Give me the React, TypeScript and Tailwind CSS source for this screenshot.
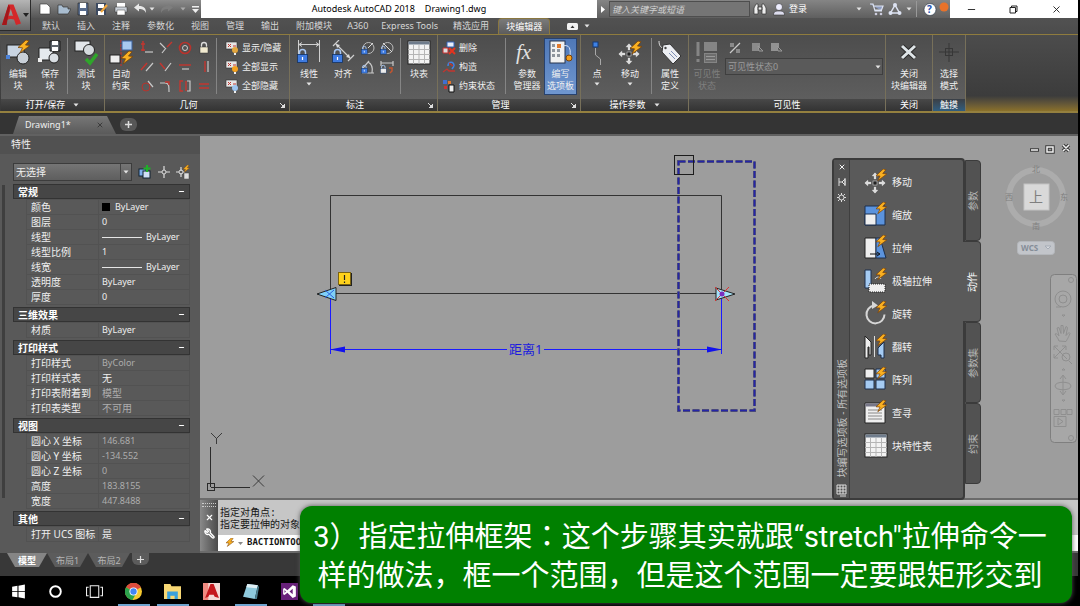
import React from "react";
import { Minus, X, Wrench } from "lucide-react";

type Kids = { children?: React.ReactNode };

const Bolt = ({ x = 0, y = 0, s = 1 }: { x?: number; y?: number; s?: number }) => (
  <path
    transform={`translate(${x} ${y}) scale(${s})`}
    d="M8 0L0 7.5L4.5 7.8L2 13L12 5.5L7.5 5L11 0.8Z"
    fill="#f9b021"
    stroke="#7a4208"
    strokeWidth="0.8"
  />
);

const Lock = ({ x, y, s = 1, fill = "#3f7be0" }: { x: number; y: number; s?: number; fill?: string }) => (
  <g transform={`translate(${x} ${y}) scale(${s})`}>
    <path d="M2.5 6V3.5a3 3 0 0 1 6 0V6" fill="none" stroke="#a9c8f5" strokeWidth="1.5" />
    <rect x="0.5" y="5.5" width="10" height="8" fill={fill} stroke="#14325f" strokeWidth="0.8" />
    <path d="M5.5 8v3" stroke="#fff" strokeWidth="1.2" />
  </g>
);

const Svg = ({ w = 24, h = 26, children }: { w?: number; h?: number } & Kids) => (
  <svg width={w} height={h} viewBox={`0 0 ${w} ${h}`} fill="none" className="shrink-0" aria-hidden="true">
    {children}
  </svg>
);

const Down = () => (
  <svg width="6" height="4" viewBox="0 0 6 4" className="shrink-0" aria-hidden="true">
    <path d="M0.500 0.500h5L3 3.500z" fill="#e4e4e4" />
  </svg>
);

const MoveArrows = () => (
  <g fill="#dcdcdc" stroke="#333" strokeWidth="0.5">
    <path d="M11 3l4 4.500h-2.500v3h-3v-3H7zM11 25l4-4.500h-2.500v-3h-3v3H7zM0 14l4.500-4v2.500h3v3h-3V18zM22 14l-4.500-4v2.500h-3v3h3V18z" />
    <rect x="9" y="12" width="4" height="4" fill="#222" stroke="#eee" />
  </g>
);

const TableIcon = () => (
  <Svg>
    <rect x="1" y="1" width="22" height="23" fill="#f3f3f3" stroke="#222" />
    <rect x="1.500" y="1.500" width="21" height="3" fill="#6f7c8c" />
    <path d="M1 9.500h22M1 14.500h22M1 19.500h22M6.500 5v19M12 5v19M17.500 5v19" stroke="#b5b5b5" />
  </Svg>
);

const icons = {
  editBlock: (
    <Svg>
      <rect x="1" y="5" width="17" height="12" fill="#c8d4e2" stroke="#222" />
      <rect x="0" y="15" width="4" height="4" fill="#4b82d8" />
      <circle cx="17" cy="18" r="6" fill="#c9d0d8" stroke="#222" />
      <Bolt x={12} y={0} />
    </Svg>
  ),
  saveBlock: (
    <Svg>
      <path d="M1 8h14v12H1z" fill="#e5e9ed" stroke="#222" />
      <circle cx="16" cy="18" r="5" fill="#d8dde2" stroke="#222" />
      <path d="M12 1h10v10H12z" fill="#5d646c" stroke="#1b1b1b" />
      <path d="M14 1h6v4h-6zM14 7h6v4h-6z" fill="#fff" />
      <path d="M0 18h4v4H0z" fill="#eee" />
    </Svg>
  ),
  testBlock: (
    <Svg>
      <rect x="1" y="1" width="15" height="10" fill="#e2e6ea" stroke="#222" />
      <circle cx="15" cy="10" r="5.500" fill="#d5dade" stroke="#222" />
      <path d="M12 19l4 4L23 14" stroke="#2fa52b" strokeWidth="3.500" />
    </Svg>
  ),
  autoCon: (
    <Svg>
      <path d="M12 0v26" stroke="#cf2f28" strokeDasharray="3 1" />
      <rect x="13" y="1" width="10" height="9" fill="#a9c9f0" stroke="#3c62a0" />
      <rect x="1" y="15" width="10" height="8" fill="#eee" stroke="#222" />
      <Bolt x={12} y={11} />
    </Svg>
  ),
  linear: (
    <Svg>
      <path d="M1.500 0v22M22.500 0v22M2 4.500h20M5 2.500L2 4.500l3 2M19 2.500l3 2-3 2" stroke="#cfcfcf" />
      <Lock x={0} y={9} />
    </Svg>
  ),
  aligned: (
    <Svg>
      <path d="M2 6L8 0M17 21l6-6M5 4l14 14" stroke="#cfcfcf" strokeWidth="1.200" />
      <path d="M5 4l4 1-3 3zM19 18l-4-1 3-3z" fill="#ddd" />
      <Lock x={1} y={9} />
    </Svg>
  ),
  fx: (
    <Svg>
      <text x="1" y="19" fontFamily="Liberation Serif, serif" fontStyle="italic" fontSize="21" fill="#e2e2e2">fx</text>
    </Svg>
  ),
  palettes: (
    <Svg>
      <rect x="1" y="1" width="15" height="22" fill="#f1f1f1" stroke="#26354f" />
      <path d="M3 4h3v3H3zM8 4h3v3H8zM3 9h3v3H3zM8 9h3v3H8zM3 14h3v3H3zM8 14h3v3H8z" fill="#8e949c" />
      <path d="M8 4h4v4H8z" fill="#e27a2c" />
      <path d="M14 6c6-2 8 3 7 9" stroke="#dbe6f6" />
      <circle cx="20" cy="18" r="3" fill="#f5a11e" stroke="#7a4208" />
    </Svg>
  ),
  point: (
    <Svg>
      <rect x="8" y="2" width="5" height="5" fill="#3f82e4" stroke="#153a78" />
      <path d="M10.500 8v7l5 4v6" stroke="#a8a8a8" />
    </Svg>
  ),
  move: (
    <Svg>
      <MoveArrows />
      <Bolt x={12} y={1} />
    </Svg>
  ),
  tag: (
    <Svg>
      <path d="M1 1c0 5 2 7 5 7" stroke="#ddd" />
      <path d="M5 5l7-1 11 12-8 8L4 12z" fill="#eceef2" stroke="#333" />
      <path d="M11 13l6 6M13 11l6 6" stroke="#7f8fb5" />
      <circle cx="7.500" cy="8" r="1.200" fill="#444" />
    </Svg>
  ),
  visState: (
    <Svg>
      <path d="M3 2v14M3 19v3" stroke="#858585" strokeWidth="3" />
      <rect x="9" y="2" width="13" height="9" fill="#858585" />
      <rect x="9.500" y="13.500" width="12" height="9" stroke="#858585" fill="#6d6d6d" />
      <path d="M11 16.500h9M11 19.500h9" stroke="#999" />
    </Svg>
  ),
  close: (
    <Svg>
      <path d="M5 6l13 12M18 6L5 18" stroke="#2b2b2b" strokeWidth="5" />
      <path d="M5 6l13 12M18 6L5 18" stroke="#dfe5e8" strokeWidth="3" />
    </Svg>
  ),
  pick: (
    <Svg>
      <path d="M12 3v19M2 12h20" stroke="#373737" />
      <rect x="8.500" y="8.500" width="7" height="7" stroke="#373737" />
    </Svg>
  ),
};

const Big = ({ icon, a, b, w, arrow, dim, active }: {
  icon: React.ReactNode; a: string; b?: string; w: string; arrow?: boolean; dim?: boolean; active?: boolean;
}) => (
  <button
    disabled={dim}
    className={`flex shrink-0 flex-col items-center whitespace-nowrap text-[9px] leading-3 ${w} ${
      dim ? "text-[#7f7f7f]" : "text-[#f0f0f0]"
    } ${active ? "my-[3px] h-[57px] border border-[#28426f] bg-linear-to-b from-[#4f78b8] to-[#6f96cf] pt-px" : "pt-[5px]"}`}
  >
    {icon}
    <span className="mt-0.5">{a}</span>
    {b && <span>{b}</span>}
    {arrow && <span className="pt-0.5"><Down /></span>}
  </button>
);

const Divider = () => <span className="mt-[3px] h-14 w-px shrink-0 bg-[#858585]" />;

const Panel = ({ title, w, arrow, launcher, blue, children }: {
  title: string; w: string; arrow?: boolean; launcher?: boolean; blue?: boolean;
} & Kids) => (
  <section className={`flex shrink-0 flex-col border-r border-[#77705a] ${w}`}>
    <div className="flex h-16 bg-linear-to-b from-[#4d4d4d] to-[#5e5e5e]">{children}</div>
    <div className={`flex h-3 items-center justify-center gap-2 bg-linear-to-b text-[9px] leading-3 text-white ${blue ? "from-[#3a3f45] to-[#2f5e80]" : "from-[#484848] to-[#333]"}`}>
      <span className={launcher ? "ml-auto" : ""}>{title}</span>
      {arrow && <Down />}
      {launcher && (
        <button aria-label={`${title} 设置`} className="mr-1 ml-auto">
          <svg width="5" height="5" viewBox="0 0 5 5"><path d="M0 0l3 3M5 1v4H1z" stroke="#ddd" fill="#ddd" /></svg>
        </button>
      )}
    </div>
  </section>
);

const G = ({ d, red, children }: { d?: string; red?: string } & Kids) => (
  <button aria-label="约束" className="flex h-[19px] w-[19px] items-center justify-center">
    <Svg w={14} h={14}>
      {d && <path d={d} stroke="#c9c9c9" strokeWidth="1.200" />}
      {red && <path d={red} stroke="#c4362f" strokeWidth="1.400" />}
      {children}
    </Svg>
  </button>
);

const Row = ({ icon, label }: { icon: React.ReactNode; label: string }) => (
  <button className="flex h-[19px] items-center gap-[3px] text-[9px] whitespace-nowrap text-[#f0f0f0]">
    {icon}
    {label}
  </button>
);

const ShowIcon = ({ c }: { c: string }) => (
  <Svg w={14} h={14}>
    <rect x="1" y="1" width="11" height="7" fill="#e6e6e6" stroke="#333" strokeWidth="0.600" />
    <path d="M3 3l3 3M6 3L3 6M8 5h3" stroke="#c4362f" />
    <circle cx="10" cy="9" r="3" fill={c} />
    <path d="M9 12h2v2H9z" fill="#eee" />
  </Svg>
);

const ribbonTabs = ["默认", "插入", "注释", "参数化", "视图", "管理", "输出", "附加模块", "A360", "Express Tools", "精选应用"];

const Quick = ({ label, children }: { label: string } & Kids) => (
  <button aria-label={label} className="flex w-[19px] shrink-0 justify-center">
    <Svg w={14} h={14}>{children}</Svg>
  </button>
);

const Header = () => (
  <header className="flex h-[34px] shrink-0 bg-linear-to-b from-[#585858] to-[#4c4c4c]">
    <button aria-label="应用程序菜单" className="flex h-[31px] w-[31px] shrink-0 items-center justify-center gap-0.5 border-r border-b border-[#2b2b2b] bg-linear-to-b from-[#b5b5b5] to-[#666]">
      <svg width="19" height="22" viewBox="0 0 19 22" aria-hidden="true">
        <path d="M0 21L6.500 0.500h5L19 19.500l-5 1.500-2-5.500c-3-1-5-.5-7 .5L4.500 21zM6.500 12c1.500-.5 3-.5 4.500 0L8.800 5z" fill="#d3282a" />
        <path d="M0 21L6.500 0.500 8 3 4.500 21z" fill="#a3171b" />
      </svg>
      <svg width="6" height="4" viewBox="0 0 6 4"><path d="M0 0h6L3 4z" fill="#222" /></svg>
    </button>
    <div className="flex min-w-0 flex-1 flex-col">
      <div className="flex h-[18px]">
        <div className="flex w-[170px] shrink-0 items-center bg-linear-to-b from-[#8c8c8c] to-[#555] pl-1">
          <Quick label="新建"><path d="M2 2h7l3 3v7H2z" fill="#fff" stroke="#333" strokeWidth="0.600" /></Quick>
          <Quick label="打开"><path d="M1 12V3h4l1 2h5v2h3l-3 5z" fill="#a9bdd0" stroke="#333" strokeWidth="0.700" /></Quick>
          <Quick label="保存"><path d="M2 1h10v12H2z" fill="#586c8c" stroke="#222" strokeWidth="0.600" /><path d="M4 1h6v5H4zM4 9h6v4H4z" fill="#fff" /></Quick>
          <Quick label="另存为"><path d="M1 1h10v12H1z" fill="#3d4a60" /><path d="M3 2h6v4H3zM3 9h6v4H3z" fill="#fff" /><path d="M6 10L12 3" stroke="#f0a53b" strokeWidth="2.200" /></Quick>
          <Quick label="打印"><path d="M3 1h8v4H3z" fill="#fff" /><path d="M1 5h12v5H1z" fill="#ccd2da" stroke="#333" strokeWidth="0.500" /><path d="M3 8h8v5H3z" fill="#fff" stroke="#444" strokeWidth="0.500" /></Quick>
          <Quick label="放弃"><path d="M1 5.500L6 1.500v2.500c5 0 7 2 7 7-1.500-3-3-4-7-4v2.500z" fill="#e8e8e8" /></Quick>
          <span className="w-2"><Down /></span>
          <Quick label="重做"><path d="M13 5.500L8 1.500v2.500c-5 0-7 2-7 7 1.500-3 3-4 7-4v2.500z" fill="#7d7d7d" /></Quick>
          <span className="mr-1 ml-1 opacity-50"><Down /></span>
          <button aria-label="自定义快速访问工具栏" className="ml-0.5"><svg width="7" height="7" viewBox="0 0 7 7"><path d="M0 0h7v1.500H0zM0 3h7L3.500 7z" fill="#eee" /></svg></button>
        </div>
        <h1 className="flex min-w-0 flex-1 items-center justify-center gap-2.5 bg-white text-[9px] whitespace-nowrap text-black">
          <span>Autodesk AutoCAD 2018</span>
          <span>Drawing1.dwg</span>
        </h1>
        <div className="flex w-[353px] shrink-0 items-center bg-linear-to-b from-[#858585] to-[#5f5f5f] text-[9px] text-white">
          <svg width="12" height="7" viewBox="0 0 12 7" className="shrink-0"><path d="M4 0l4 3.500L4 7z" fill="#fff" /></svg>
          <input aria-label="搜索" placeholder="键入关键字或短语" className="h-4 w-[141px] shrink-0 border border-[#4e4e4e] bg-[#757575] px-0.5 text-[9px] italic placeholder:text-[#d0d0d0]" />
          <button aria-label="查找" className="ml-[3px] shrink-0"><Svg w={14} h={14}><path d="M1 12V6l2-4h2v10zM13 12V6l-2-4H9v10zM5 5h4v3H5z" fill="#eee" stroke="#333" strokeWidth="0.700" /></Svg></button>
          <button className="ml-1.5 flex shrink-0 items-center gap-1 whitespace-nowrap"><Svg w={12} h={14}><circle cx="6" cy="5" r="3.500" fill="#eef" stroke="#333" strokeWidth="0.600" /><path d="M0.500 13c0-4 3-4 5.500-4s5.500 0 5.500 4z" fill="#dde" stroke="#333" strokeWidth="0.600" /></Svg>登录</button>
          <span className="ml-auto"><Down /></span>
          <button aria-label="应用商店" className="ml-2 shrink-0"><Svg w={14} h={14}><path d="M0 2h3l2 7h7M3.500 4H13l-1.500 4H5" stroke="#dde3f2" fill="#8e9cc0" strokeWidth="1.200" /><circle cx="6" cy="12" r="1.300" fill="#ccd" /><circle cx="11" cy="12" r="1.300" fill="#ccd" /></Svg></button>
          <button aria-label="保持连接" className="ml-1 shrink-0"><Svg w={14} h={14}><path d="M7 3L2.500 11h9z" stroke="#dde3f2" strokeWidth="1.500" /><circle cx="7" cy="3" r="2" fill="#dde3f2" /><circle cx="2.500" cy="11" r="2" fill="#dde3f2" /><circle cx="11.500" cy="11" r="2" fill="#dde3f2" /></Svg></button>
          <span className="ml-1"><Down /></span>
          <span className="ml-1 h-4 w-px shrink-0 bg-[#999]" />
          <button aria-label="帮助" className="ml-1.5 flex shrink-0"><Svg w={27} h={14}><circle cx="7" cy="7.500" r="6" fill="#fff" stroke="#234" strokeWidth="0.600" /><text x="4" y="11" fontSize="10" fontWeight="bold" fill="#1d50b0" fontFamily="Noto Sans">?</text><circle cx="21" cy="5" r="4.500" fill="#e8722a" /></Svg></button>
        </div>
        <div className="flex w-32 shrink-0 items-center justify-around bg-white text-[#222]">
          <button aria-label="最小化"><Minus size={11} strokeWidth={2} /></button>
          <button aria-label="还原"><Svg w={9} h={9}><path d="M1 2.500h5.500V8H1zM2.500 2.500V1H8v5.500H6.500" stroke="#222" /></Svg></button>
          <button aria-label="关闭"><X size={11} strokeWidth={2} /></button>
        </div>
      </div>
      <nav className="flex h-4 items-stretch gap-px pl-[3px] text-[9px] whitespace-nowrap text-[#d6d6d6]">
        {ribbonTabs.map((t) => (
          <button key={t} className={`leading-4 ${t === "Express Tools" || t === "A360" ? "px-1.5" : "px-2"}`}>{t}</button>
        ))}
        <button className="rounded-t-sm border border-b-0 border-[#8a7740] bg-linear-to-b from-[#7a7a7a] to-[#5c5c5c] px-[7px] leading-[15px] text-white">块编辑器</button>
        <button aria-label="功能区显示" className="ml-4 flex items-center gap-1.5">
          <Svg w={11} h={7}><rect width="11" height="7" rx="1.500" fill="#f2f2f2" /><path d="M3.500 5L5.500 2.500 7.500 5z" fill="#333" /></Svg>
          <Down />
        </button>
      </nav>
    </div>
  </header>
);

const Ribbon = () => (
  <div className="flex h-[79px] shrink-0 border-t border-b-2 border-t-[#8f7c3e] border-b-[#94803f] bg-linear-to-b from-[#505050] to-[#3a3a3a] pl-px">
    <Panel title="打开/保存" w="w-[104px]" arrow>
      <Big icon={icons.editBlock} a="编辑" b="块" w="w-[34px]" />
      <Big icon={icons.saveBlock} a="保存" b="块" w="w-[30px]" />
      <span className="w-0.5" />
      <Divider />
      <Big icon={icons.testBlock} a="测试" b="块" w="w-9" />
    </Panel>
    <Panel title="几何" w="w-[185px]" launcher>
      <Big icon={icons.autoCon} a="自动" b="约束" w="w-8" />
      <div className="grid grid-cols-[repeat(4,19px)] content-start pt-[3px]">
        <G red="M3 0v10M1 3h4M1 9h4" d="M5 11h8" />
        <G red="M8 6l5-5" d="M1 2l5 5M3 12l4-5" />
        <G><circle cx="7" cy="7" r="5.500" stroke="#b8332c" strokeWidth="1.600" /><circle cx="7" cy="7" r="2.500" stroke="#ccc" /></G>
        <G><path d="M4.500 6V4a2.500 2.500 0 0 1 5 0v2" stroke="#ddd" strokeWidth="1.300" /><rect x="3" y="6" width="8" height="6" fill="#f1ead0" stroke="#333" strokeWidth="0.500" /></G>
        <G red="M1 10l6-7" d="M6 11l7-8" />
        <G red="M1 3l5 6" d="M6 11l6-8" />
        <G red="M1 5h12" d="M4 9h7" />
        <G red="M8 1v11" d="M11 1v11" />
        <G d="M8 2l5 6"><circle cx="6" cy="8" r="4" stroke="#b8332c" /></G>
        <G d="M1 4h5c4 0 4 3 4 9" red="M6 3h4v3" />
        <G red="M5 2H2v10h3M8 2v10" d="M9 2h3v10H9" />
        <G red="M2 5h10M2 9h10" />
      </div>
      <span className="w-[3px]" />
      <Divider />
      <div className="flex flex-col pt-[3px] pl-2">
        <Row icon={<ShowIcon c="#e3a63e" />} label="显示/隐藏" />
        <Row icon={<ShowIcon c="#f5a11e" />} label="全部显示" />
        <Row icon={<ShowIcon c="#9cc3ee" />} label="全部隐藏" />
      </div>
    </Panel>
    <Panel title="标注" w="w-[148px]" launcher>
      <Big icon={icons.linear} a="线性" w="w-[38px]" arrow />
      <Big icon={icons.aligned} a="对齐" w="w-[30px]" />
      <div className="grid grid-cols-[repeat(2,19px)] content-start pt-[3px]">
        <G><circle cx="7.500" cy="7" r="5.500" stroke="#bbb" /><path d="M7 7l5-5" stroke="#ddd" /><Lock x={0} y={5} s={0.6} /></G>
        <G><circle cx="7.500" cy="7" r="5.500" stroke="#bbb" /><path d="M3 2l9 9" stroke="#ddd" /><Lock x={0} y={5} s={0.6} /></G>
        <G d="M2 8L8 1M7 2c4 2 5 6 4 11M1 13h12"><Lock x={0} y={5} s={0.6} /></G>
        <G d="M1 1v5M13 1v5M1 3h12"><Lock x={0} y={5} s={0.6} fill="#e8e8e8" /><path d="M9 8h3v3l-2 2" stroke="#c4552f" strokeWidth="1.500" /></G>
      </div>
      <span className="w-1.5" />
      <Divider />
      <Big icon={<TableIcon />} a="块表" w="w-9" />
    </Panel>
    <Panel title="管理" w="w-[143px]" launcher>
      <div className="flex w-[67px] flex-col pt-[3px] pl-1">
        <Row icon={<Svg w={14} h={14}><path d="M5 1h7v5H5z" fill="#e8eefa" stroke="#3563b8" /><path d="M1 7h5v5H1z" stroke="#c33" fill="#ddd" /><path d="M7 7l6 6M13 7l-6 6" stroke="#e5331f" strokeWidth="2" /></Svg>} label="删除" />
        <Row icon={<Svg w={14} h={14}><path d="M6 6c0-5 6-5 6 0M12 6l-2 3" stroke="#3f82e4" strokeWidth="1.500" /><path d="M1 12l4-3 2 2h6M7 3l4 3" stroke="#c4362f" strokeWidth="1.300" /></Svg>} label="构造" />
        <Row icon={<Svg w={14} h={14}><path d="M1 1h4v4H1z" fill="#3f6fd0" /><path d="M6 2h3v3H6z" fill="#e2742a" /><path d="M2 7h3v3H2z" fill="#c33" /><path d="M7 6h5v7H7z" fill="#eee" stroke="#111" /></Svg>} label="约束状态" />
      </div>
      <Divider />
      <span className="w-1" />
      <Big icon={icons.fx} a="参数" b="管理器" w="w-[34px]" />
      <Big icon={icons.palettes} a="编写" b="选项板" w="w-[33px]" active />
    </Panel>
    <Panel title="操作参数" w="w-[108px]" arrow>
      <Big icon={icons.point} a="点" w="w-8" arrow />
      <Big icon={icons.move} a="移动" w="w-[34px]" arrow />
      <span className="w-1" />
      <Divider />
      <Big icon={icons.tag} a="属性" b="定义" w="w-9" />
    </Panel>
    <Panel title="可见性" w="w-[197px]">
      <Big icon={icons.visState} a="可见性" b="状态" w="w-9" dim />
      <div className="flex flex-1 flex-col pt-[3px] pr-1">
        <div className="flex h-5 items-center">
          <G d="M2 12L12 2"><path d="M2 2h4v4H2zM8 8h4v4H8z" fill="#8a8a8a" /></G>
          <span className="w-[3px]" />
          <G><path d="M2 2h8v8H2z" fill="#8a8a8a" /><path d="M8 5l5 5H9z" fill="#555" stroke="#999" /></G>
          <G><path d="M2 2h8v8H2z" fill="#929292" /><path d="M8 5l5 5H9z" fill="#555" stroke="#999" /></G>
        </div>
        <div className="flex items-center">
          <select aria-label="可见性状态" disabled className="h-[17px] min-w-0 flex-1 appearance-none border border-[#3f3f3f] bg-[#5a5a5a] px-0.5 text-[9px] text-[#9a9a9a] opacity-100">
            <option>可见性状态0</option>
          </select>
          <span className="-ml-2"><Down /></span>
        </div>
      </div>
    </Panel>
    <Panel title="关闭" w="w-[47px]">
      <Big icon={icons.close} a="关闭" b="块编辑器" w="w-[46px]" />
    </Panel>
    <Panel title="触摸" w="w-[33px]" blue>
      <Big icon={icons.pick} a="选择" b="模式" w="w-8" />
    </Panel>
    <div className="flex-1 bg-linear-to-b from-[#4c4c4c] via-[#3c3c3c] via-80% to-[#8a7029]" />
  </div>
);

type Prop = { k: string; v: string; dim?: boolean; kind?: "swatch" | "line" };
const groups: { title: string; rows: Prop[] }[] = [
  {
    title: "常规",
    rows: [
      { k: "颜色", v: "ByLayer", kind: "swatch" },
      { k: "图层", v: "0" },
      { k: "线型", v: "ByLayer", kind: "line" },
      { k: "线型比例", v: "1" },
      { k: "线宽", v: "ByLayer", kind: "line" },
      { k: "透明度", v: "ByLayer" },
      { k: "厚度", v: "0" },
    ],
  },
  { title: "三维效果", rows: [{ k: "材质", v: "ByLayer" }] },
  {
    title: "打印样式",
    rows: [
      { k: "打印样式", v: "ByColor", dim: true },
      { k: "打印样式表", v: "无" },
      { k: "打印表附着到", v: "模型", dim: true },
      { k: "打印表类型", v: "不可用", dim: true },
    ],
  },
  {
    title: "视图",
    rows: [
      { k: "圆心 X 坐标", v: "146.681", dim: true },
      { k: "圆心 Y 坐标", v: "-134.552", dim: true },
      { k: "圆心 Z 坐标", v: "0", dim: true },
      { k: "高度", v: "183.8155", dim: true },
      { k: "宽度", v: "447.8488", dim: true },
    ],
  },
  { title: "其他", rows: [{ k: "打开 UCS 图标", v: "是" }] },
];

const Properties = () => (
  <aside className="flex w-[200px] shrink-0 flex-col bg-[#595959] text-[10px] text-[#efefef]">
    <h2 className="h-[18px] bg-[#515151] pl-[11px] leading-[17px]">特性</h2>
    <div className="mt-[9px] flex h-[18px] items-center pr-2 pl-[13px]">
      <div className="flex h-[18px] w-[119px] items-center border border-[#3c3c3c] bg-linear-to-b from-[#757575] to-[#5e5e5e]">
        <select aria-label="选择对象" className="h-4 min-w-0 flex-1 appearance-none pl-0.5 leading-4">
          <option>无选择</option>
        </select>
        <span className="flex h-4 w-[11px] items-center justify-center border-l border-[#444]"><Down /></span>
      </div>
      <button aria-label="切换 PICKADD" className="ml-1.5"><Svg w={14} h={14}><rect x="1" y="4" width="7" height="7" fill="#7fb0ee" stroke="#123" /><rect x="5" y="6" width="7" height="7" fill="#cfe0f7" stroke="#123" /><path d="M9 0v7M5.500 3.500h7" stroke="#20b02a" strokeWidth="2.200" /></Svg></button>
      <button aria-label="选择对象" className="ml-[5px]"><Svg w={14} h={14}><path d="M7 1v4M7 9v4M1 7h4M9 7h4" stroke="#ddd" strokeWidth="1.200" /><circle cx="7" cy="7" r="2" stroke="#ddd" /></Svg></button>
      <button aria-label="快速选择" className="ml-[5px]"><Svg w={14} h={14}><path d="M5 2v4M5 8v4M0 7h3M7 7h2" stroke="#ddd" strokeWidth="1.200" /><circle cx="5" cy="7" r="2" stroke="#ddd" /><Bolt x={7} y={0} s={0.55} /><rect x="8" y="8" width="5" height="6" fill="#ddd" stroke="#444" strokeWidth="0.500" /></Svg></button>
    </div>
    <div className="mt-[3px] flex">
      <div className="mt-px ml-0.5 h-[313px] w-[3px] shrink-0 bg-[#3f3f3f]" />
      <div className="ml-2 flex w-[177px] flex-col gap-0.5">
        {groups.map((g) => (
          <section key={g.title}>
            <h3 className="flex h-[15px] items-center justify-between border border-[#333] bg-[#464646] pr-1 pl-1 leading-none font-bold text-white">
              {g.title}
              <Minus size={7} strokeWidth={4} />
            </h3>
            <table className="ml-[13px] w-[164px] table-fixed border-collapse">
              <tbody>
                {g.rows.map((r) => (
                  <tr key={r.k} className="h-[15px] border border-[#525252]">
                    <th scope="row" className="w-[72px] border-r border-[#525252] p-0 pl-1 text-left leading-[14px] font-normal whitespace-nowrap">{r.k}</th>
                    <td className={`p-0 pl-[3px] leading-[14px] whitespace-nowrap ${/^[\x20-\x7e]+$/.test(r.v) ? "text-[9px]" : ""} ${r.dim ? "text-[#adadad]" : ""}`}>
                      <span className="flex items-center">
                        {r.kind === "swatch" && <span className="mr-[5px] size-2 bg-black" />}
                        {r.kind === "line" && <span className="mr-1 h-px w-10 bg-[#e6e6e6]" />}
                        {r.v}
                      </span>
                    </td>
                  </tr>
                ))}
              </tbody>
            </table>
          </section>
        ))}
      </div>
    </div>
  </aside>
);

const Drawing = () => (
  <svg width="878" height="362" viewBox="200 136 878 362" fill="none" className="absolute top-0 left-0" role="img" aria-label="图形">
    <path d="M330.500 294V195.500H721.500V294M330 293.500H722" stroke="#333" />
    <path d="M330.500 294V354M721.500 294V354M331 349.500H507M544 349.500H721" stroke="#1a1aff" />
    <path d="M330 349.500l15-3v6zM722 349.500l-15-3v6z" fill="#1111ee" />
    <text x="509" y="354" fontSize="13" fill="#1a1add" fontFamily="Noto Sans, Noto Sans CJK SC">距离1</text>
    <rect x="678.500" y="161.500" width="76" height="249" stroke="#55556e" strokeWidth="3" strokeDasharray="7 2.500" />
    <rect x="678.500" y="161.500" width="76" height="249" stroke="#2525a8" strokeWidth="1.600" strokeDasharray="7 2.500" />
    <rect x="674.500" y="155.500" width="19" height="19" stroke="#1c1c1c" />
    <path d="M317 294l19-6.500v13z" fill="#7fd0f8" stroke="#222" />
    <path d="M325 290l9 8M334 290l-9 8" stroke="#2a5fe0" />
    <path d="M735 294l-19-6v12z" fill="#a5e3f8" stroke="#222" />
    <path d="M715 287l14 14M729 287l-14 14" stroke="#e03030" />
    <circle cx="722" cy="294" r="2.500" fill="#7a2fc0" />
    <rect x="339" y="273" width="13" height="13" fill="#222" />
    <rect x="338.500" y="272.500" width="12" height="12" fill="#ffd21c" stroke="#7c6410" />
    <path d="M344.500 275v5M344.500 281.500v1.500" stroke="#222" strokeWidth="1.200" />
    <path d="M210.500 447v40M211 487.500h39" stroke="#2b2b2b" />
    <rect x="207.500" y="483.500" width="7" height="7" stroke="#2b2b2b" />
    <path d="M211 433l5.500 5.500L222 433M216.500 438v6M253 475.500l11 11M264 475.500l-11 11" stroke="#3b3b3b" />
    <circle cx="1036" cy="197" r="27" stroke="#acacac" strokeWidth="6" />
    <rect x="1024" y="184" width="25" height="26" fill="#d9d9d9" stroke="#c4c4c4" />
    <g fontFamily="Noto Sans CJK SC" fill="#7f7f7f" fontSize="8">
      <text x="1029" y="202" fontSize="14">上</text>
      <text x="1032" y="172">北</text>
      <text x="1032" y="229">南</text>
      <text x="1005" y="200">西</text>
      <text x="1060" y="200">东</text>
    </g>
    <rect x="1017.500" y="241.500" width="37" height="13" rx="3" fill="#c2c5ca" stroke="#b4b7bb" />
    <text x="1021" y="251" fontSize="8" fontWeight="bold" fill="#858d98" fontFamily="Noto Sans">WCS</text>
    <path d="M1045 246h6l-3 3z" stroke="#a4abb5" fill="#d8dade" />
    <rect x="1050.500" y="274.500" width="26" height="168" rx="4" fill="#a7a7a7" stroke="#7f7f7f" />
    <g stroke="#8f8f8f">
      <circle cx="1071" cy="280" r="2.500" />
      <circle cx="1063" cy="299" r="8" />
      <circle cx="1063" cy="299" r="4" />
      <path d="M1056 307h5M1062 315h3l-1.500 1.500z" />
      <path d="M1059 341c-1-3-3-5-4-7 2-1 3 1 4 2l-2-8 2-.5 2 6v-8h2l.5 8 2.500-7 1.500 1-1.500 8 3-3 1 1c-2 5-3 6-4 8z" />
      <path d="M1054 346l13 13M1066 346l-12 12M1054 350v-4h4M1062 346h4v4M1054 354v4h4M1069 361l3 3" />
      <circle cx="1066" cy="357" r="4" />
      <path d="M1063 376v18M1060 379l3-4 3 4M1060 391l3 4 3-4M1071 386c0 5-16 5-16 0s16-5 16 0M1062 370h3l-1.500-1.500zM1062 400h3l-1.500 1.500z" />
      <path d="M1054 409.500h5v5h-5zM1061 409.500h5v5h-5zM1067 409.500h5v5h-5zM1054 416.500h12v10h-12zM1058 418v7l5-3.500z" />
      <circle cx="1071" cy="438" r="2.500" />
    </g>
    <g stroke="#3d3d3d" strokeWidth="3.500">
      <path d="M1030 150h9M1047 147h6v5h-6zM1063 145l6 6M1069 145l-6 6" />
    </g>
    <g stroke="#f1f1f1" strokeWidth="1.500">
      <path d="M1031 150h7M1047 147h6v5h-6zM1063 145l6 6M1069 145l-6 6" />
    </g>
  </svg>
);

const actions: { label: string; icon: React.ReactNode }[] = [
  { label: "移动", icon: <MoveArrows /> },
  { label: "缩放", icon: <><path d="M1 4h20v19H1z" fill="#5b93dd" stroke="#1c2f4c" /><path d="M1 12h11v11H1z" fill="#efefef" stroke="#1c2f4c" /></> },
  { label: "拉伸", icon: <><path d="M1 3h11v20H1z" fill="#efefef" stroke="#222" /><path d="M12 3h4l6 20H12z" fill="#5b93dd" stroke="#1c2f4c" /><path d="M6 19h9M13 17l3 2-3 2" stroke="#111" /></> },
  { label: "极轴拉伸", icon: <><path d="M1 2h6v18H1z" fill="#a5cbf3" stroke="#1c2f4c" /><path d="M5 16h16v8H5z" fill="#efefef" stroke="#222" strokeDasharray="1 1" /><path d="M11 11c2-3 5-2 6 0" stroke="#ddd" /></> },
  { label: "旋转", icon: <><path d="M10 4.500a9 9 0 1 0 10.500 9" stroke="#d6d6d6" strokeWidth="2" /><path d="M8 0l6 4.500L8 8z" fill="#d6d6d6" /></> },
  { label: "翻转", icon: <><path d="M1 2l6 6v13H5v-8H4v11H1z" fill="#efefef" stroke="#222" /><path d="M10.500 2v21" stroke="#ddd" /><path d="M20 8l-6 6v7h3v3h3z" fill="#a5cbf3" stroke="#1c2f4c" /></> },
  { label: "阵列", icon: <><path d="M1 2h9v9H1z" fill="#efefef" stroke="#222" /><path d="M12 2h9v9h-9zM1 13h9v9H1zM12 13h9v9h-9z" fill="#a5cbf3" stroke="#1c2f4c" /></> },
  { label: "查寻", icon: <><path d="M1 3h20v20H1z" fill="#efefef" stroke="#222" /><path d="M1.500 5h19" stroke="#778" strokeWidth="3" /><path d="M4 10h14M4 13h14M4 16h14M4 19h14" stroke="#888" /></> },
];

const Palette = () => (
  <div className="absolute top-[22px] right-[97px] z-10 flex h-[342px] text-[10px] text-[#f0f0f0]">
    <div className="flex rounded-sm border-2 border-[#3b3b3b] bg-[#5a5a5a]">
      <div className="flex w-[15px] flex-col items-center gap-[7px] bg-[#535353] pt-[3px]">
        <button aria-label="关闭选项板"><X size={8} strokeWidth={3} /></button>
        <button aria-label="自动隐藏"><Svg w={8} h={8}><path d="M1 0v8M7 0v8M1 4h3M7 1L4 4l3 3z" stroke="#ddd" /></Svg></button>
        <button aria-label="特性设置"><Svg w={9} h={9}><circle cx="4.500" cy="4.500" r="2.500" stroke="#ddd" /><path d="M4.500 0v2M4.500 7v2M0 4.500h2M7 4.500h2M1 1l1.500 1.500M8 8L6.500 6.500M8 1L6.500 2.500M1 8l1.500-1.500" stroke="#ddd" /></Svg></button>
        <span className="mt-auto rotate-180 text-[10px] leading-[14px] whitespace-nowrap text-[#c2c2c2] [text-orientation:sideways] [writing-mode:vertical-rl]">块编写选项板 - 所有选项板</span>
        <Svg w={11} h={14}><path d="M1 1h9v9H1zM1 4h9M1 7h9M4 1v9M7 1v9M4 12h6" stroke="#ddd" /></Svg>
      </div>
      <div className="w-[114px] border-l border-[#3f3f3f] pt-[9px] pl-[14px]">
        {[...actions, { label: "块特性表", icon: null }].map((a) => (
          <button key={a.label} className="mb-[7px] flex h-[26px] items-center gap-1 whitespace-nowrap">
            {a.icon ? <Svg>{a.icon}<Bolt x={12} y={0} s={0.9} /></Svg> : <TableIcon />}
            {a.label}
          </button>
        ))}
      </div>
    </div>
    <div className="mt-0.5 flex h-[324px] w-4 flex-col">
      {["参数", "动作", "参数集", "约束"].map((t) => (
        <button
          key={t}
          className={`flex flex-1 items-center justify-center rounded-r-sm border border-[#3b3b3b] ${
            t === "动作" ? "-ml-0.5 border-l-0 bg-[#5a5a5a] text-white" : "bg-[#525252] text-[#b5b5b5]"
          }`}
        >
          <span className="rotate-180 leading-3 [text-orientation:sideways] [writing-mode:vertical-rl]">{t}</span>
        </button>
      ))}
    </div>
  </div>
);

const CommandLine = () => (
  <div className="flex h-[55px] shrink-0 border-t-2 border-b-2 border-t-[#6b6b6b] border-b-[#6b6b6b]">
    <div className="flex w-[18px] flex-col items-center gap-1.5 bg-linear-to-r from-[#8a8a8a] to-[#4b4b4b] pt-[3px] text-white">
      <span className="h-1 w-3.5 border-y border-dotted border-[#ccc]" />
      <button aria-label="关闭命令行"><X size={9} strokeWidth={3} /></button>
      <button aria-label="自定义" className="-scale-x-100"><Wrench size={11} strokeWidth={3} /></button>
    </div>
    <div className="flex min-w-0 flex-1 flex-col bg-[#c6c6c6] font-['Liberation_Mono','Noto_Sans_CJK_SC',monospace] text-[10px] whitespace-nowrap text-[#151515]">
      <div className="flex-1 pt-2 pl-0.5 leading-3">
        <p>指定对角点:</p>
        <p>指定要拉伸的对象</p>
      </div>
      <label className="flex h-4 items-center gap-1 bg-white pl-2">
        <Svg w={8} h={10}><Bolt x={0} y={0} s={0.65} /></Svg>
        <svg width="5" height="3" viewBox="0 0 5 3"><path d="M0 0h5L2.500 3z" fill="#888" /></svg>
        <input aria-label="命令" defaultValue="BACTIONTOOL" className="min-w-0 flex-1 font-['DejaVu_Sans_Mono',monospace] text-[9px] font-bold outline-none" />
      </label>
    </div>
  </div>
);

const layoutShape = "[clip-path:polygon(0_0,100%_0,calc(100%-8px)_100%,8px_100%)]";

const TaskItem = ({ label, open, w = "w-[39px]", children }: { label: string; open?: boolean; w?: string } & Kids) => (
  <button aria-label={label} className={`flex h-[30px] flex-col items-center justify-between pt-[7px] ${w}`}>
    <svg width="17" height="17" viewBox="0 0 16 16" fill="none">{children}</svg>
    <span className={`h-0.5 w-8 ${open ? "bg-[#6ea4cf]" : ""}`} />
  </button>
);

const Taskbar = () => (
  <footer className="flex h-[30px] shrink-0 items-center bg-black">
    <TaskItem label="开始" w="w-9"><path d="M2 3.500l5-.8v5H2zM8 2.500l6-1v6.200H8zM2 8.500h5v5l-5-.8zM8 8.500h6v6l-6-1z" fill="#fff" /></TaskItem>
    <TaskItem label="Cortana"><circle cx="8" cy="8" r="5" stroke="#fff" strokeWidth="1.800" /></TaskItem>
    <TaskItem label="任务视图"><path d="M4 2.500h8v11H4zM2.500 4H0.500v8h2M13.500 4h2v8h-2" stroke="#eee" /></TaskItem>
    <TaskItem label="Chrome" open>
      <circle cx="8" cy="8" r="8" fill="#f6c92f" />
      <path d="M8 8L1 4a8 8 0 0 1 14 0z" fill="#dd4b3e" />
      <path d="M8 8L1 4a8 8 0 0 0 6 12l4-7z" fill="#2ba24c" />
      <circle cx="8" cy="8" r="3.800" fill="#fff" /><circle cx="8" cy="8" r="3" fill="#4285f4" />
    </TaskItem>
    <TaskItem label="文件资源管理器" open><path d="M0 1h6l1 2h9v12H0z" fill="#f7d774" /><path d="M3 8h10v7h-3v-3H6v3H3z" fill="#3aa0dc" /></TaskItem>
    <TaskItem label="AutoCAD">
      <rect width="16" height="16" fill="#f3d9d6" /><path d="M0 0h5v16H0z" fill="#f08a80" /><path d="M2 14L7 1h3l5 13-4-1-1-2H6l-1 2z" fill="#c4171c" />
    </TaskItem>
    <TaskItem label="记事本" open><path d="M5 1l10 1-3 13-11-2z" fill="#8ec9dc" /><path d="M5 1l10 1-1 3-10-1z" fill="#dfeff5" /><path d="M12 15l3-13 1 2-2 11z" fill="#4a7c8d" /></TaskItem>
    <TaskItem label="Visual Studio"><rect width="16" height="16" fill="#68217a" /><path d="M11 2l3 1.200v9.600L11 14 6 9.200 3.300 11.200 2 10.500v-5l1.300-.7L6 6.800zM11 5.500L8 8l3 2.500zM3.300 6.700v2.600L4.700 8z" fill="#fff" fillRule="evenodd" /></TaskItem>
    <TaskItem label="应用" open />
    <TaskItem label="应用" />
  </footer>
);

const P = ({ children }: Kids) => <span className="font-['Noto_Sans_CJK_TC',sans-serif]" lang="zh-TW">{children}</span>;

export default function App() {
  return (
    <div className="relative flex min-h-screen flex-col overflow-hidden bg-black pr-0.5 font-['Noto_Sans','Noto_Sans_CJK_SC',sans-serif]" lang="zh-CN">
      <Header />
      <Ribbon />
      <div className="flex h-[23px] shrink-0 items-end border-b-2 border-[#616161] bg-[#343434] pl-[13px]">
        <button className="flex h-[18px] w-[103px] items-center justify-between bg-linear-to-b from-[#777] to-[#5a5a5a] pr-3 pl-3 text-[9px] text-[#f0f0f0] [clip-path:polygon(6px_0,calc(100%-9px)_0,100%_100%,0_100%)]">
          Drawing1* <X size={8} strokeWidth={2.5} className="text-[#333]" />
        </button>
        <button aria-label="新图形" className="mb-[3px] ml-1 flex h-[13px] w-[17px] items-center justify-center rounded-md bg-[#575757]">
          <Svg w={7} h={7}><path d="M3.500 0v7M0 3.500h7" stroke="#ddd" strokeWidth="1.500" /></Svg>
        </button>
      </div>
      <div className="flex flex-1">
        <Properties />
        <main className="flex min-w-0 flex-1 flex-col">
          <div className="relative flex-1 bg-[#9d9d9d]">
            <Drawing />
            <Palette />
          </div>
          <CommandLine />
        </main>
      </div>
      <div className="flex h-[23px] shrink-0 items-start bg-[#383838] pl-[7px] text-[9px] text-[#b5b5b5]">
        <button className={`h-[14px] w-10 bg-[#858585] font-bold leading-[13px] text-white ${layoutShape}`}>模型</button>
        <button className={`h-[14px] w-[41px] bg-[#5c5c5c] leading-[13px] ${layoutShape}`}>布局1</button>
        <button className={`h-[14px] w-[42px] bg-[#5c5c5c] leading-[13px] ${layoutShape}`}>布局2</button>
        <button aria-label="新建布局" className="ml-0.5 flex h-3 w-[17px] items-center justify-center rounded-b-md bg-[#5c5c5c]">
          <Svg w={7} h={7}><path d="M3.500 0v7M0 3.500h7" stroke="#ddd" strokeWidth="1.200" /></Svg>
        </button>
      </div>
      <Taskbar />
      <p className="absolute right-2 bottom-[3px] left-[300px] z-20 flex h-[97px] flex-col items-center rounded-xl bg-[#008000] pt-[9px] pr-3 font-['Roboto','Noto_Sans_CJK_SC',sans-serif] text-[29px] leading-[39px] whitespace-nowrap text-white shadow-[0_0_5px_#555]">
        <span>3<P>）</P>指定拉伸框架<P>：</P>这个步骤其实就跟“stretch"拉伸命令一</span>
        <span>样的做法，框一个范围，但是这个范围一定要跟矩形交到</span>
      </p>
    </div>
  );
}
